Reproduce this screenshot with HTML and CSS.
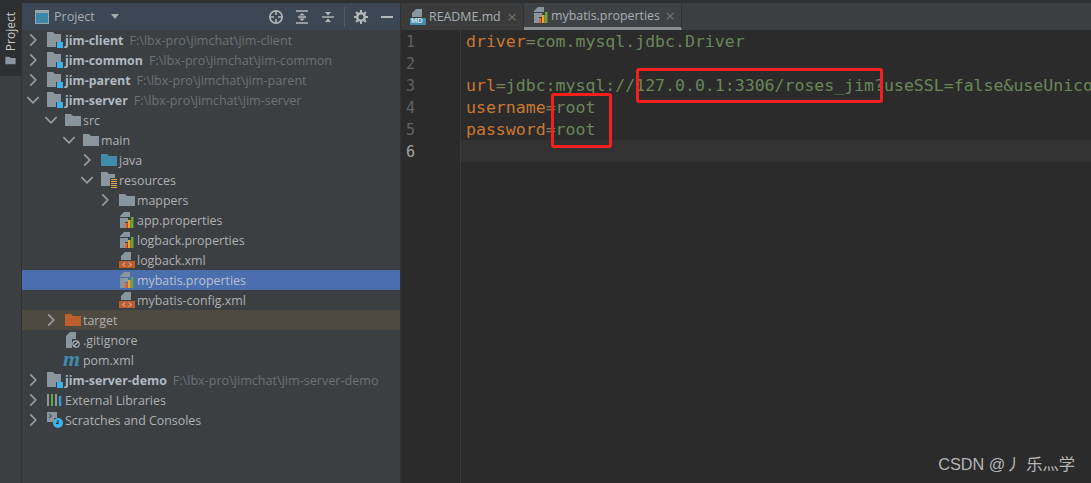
FILE: index.html
```html
<!DOCTYPE html>
<html lang="en">
<head>
    <meta charset="UTF-8">
    <title>mybatis.properties</title>
    <link rel="stylesheet" href="styles.css">
</head>
<body>
    <svg class="defs" width="0" height="0">
        <symbol id="folder" viewBox="0 0 16 14"><path d="M0 1h6l2 2h8v10H0z" fill="#8a969e"/></symbol>
        <symbol id="module" viewBox="0 0 16 16"><path d="M0 0h6l2 2h6v8H9v5H0z" fill="#8a969e"/><rect x="10" y="10" width="6" height="6" fill="#3cb4ea"/></symbol>
        <symbol id="java" viewBox="0 0 16 14"><path d="M0 1h6l2 2h8v10H0z" fill="#3f8cab"/></symbol>
        <symbol id="res" viewBox="0 0 16 16"><path d="M0 0h6l2 2h6v4H9v8H0z" fill="#8a969e"/><path d="M10 7.500h6M10 9.500h6M10 11.500h6M10 13.500h6M10 15.500h6" stroke="#e2a94e" stroke-width="1"/></symbol>
        <symbol id="target" viewBox="0 0 16 14"><path d="M0 1h6l2 2h8v10H0z" fill="#bd5e2d"/></symbol>
        <symbol id="props" viewBox="0 0 14 16"><path d="M4 0h6v5H0V4zM0 6h8v4H5v6H0z" fill="#8a969e"/><rect x="5" y="11" width="2.500" height="5" fill="#e8622c"/><rect x="8" y="8" width="2.500" height="8" fill="#f2a22c"/><rect x="11" y="5" width="2.500" height="11" fill="#62a838"/></symbol>
        <symbol id="xml" viewBox="0 0 16 16"><path d="M6 0h6v8H2V4z" fill="#8a969e"/><rect y="9" width="16" height="7" fill="#bd5e2d"/><path d="M6 10.500 4 12.500l2 2M10 10.500l2 2-2 2" fill="none" stroke="#ddd" stroke-width="1"/></symbol>
        <symbol id="ignore" viewBox="0 0 14 16"><path d="M4 0h6v7H6v9H0V4z" fill="#8a969e"/><circle cx="10" cy="12" r="3.200" fill="none" stroke="#a9b0b5" stroke-width="1.200"/><path d="M8 14l4-4" stroke="#a9b0b5" stroke-width="1.200"/></symbol>
        <symbol id="libs" viewBox="0 0 16 14"><path d="M1 1v12" stroke="#8a969e" stroke-width="2"/><path d="M5 1v12" stroke="#62a838" stroke-width="2"/><path d="M9 1v12" stroke="#8a969e" stroke-width="2"/><path d="M13 3v10" stroke="#3f9cc8" stroke-width="2.400"/></symbol>
        <symbol id="scratch" viewBox="0 0 16 16"><path d="M0 0h10v6H7v4H0z" fill="#8a969e"/><path d="M2 2l2.500 2L2 6" fill="none" stroke="#3c3f41" stroke-width="1"/><circle cx="11" cy="11" r="5" fill="#3cb4ea"/><path d="M11 8v3.400h-2" fill="none" stroke="#2b2b2b" stroke-width="1.100"/></symbol>
        <symbol id="closed" viewBox="0 0 10 10"><path d="M3 1l4 4-4 4" fill="none" stroke="#9a9da0" stroke-width="1.200"/></symbol>
        <symbol id="open" viewBox="0 0 10 10"><path d="M1 3l4 4 4-4" fill="none" stroke="#9a9da0" stroke-width="1.200"/></symbol>
    </svg>

    <div class="topline"></div>
    <div class="ide">
        <div class="strip">
            <div class="strip-btn">
                <span class="strip-label">Project</span>
                <svg class="strip-icon" width="11" height="9"><use href="#folder"/></svg>
            </div>
        </div>

        <div class="sidebar">
            <div class="panel-head">
                <svg class="panel-icon" width="14" height="14" viewBox="0 0 14 14"><rect x=".5" y=".5" width="13" height="13" fill="#3b87a8" stroke="#9aa4ab"/><rect x="1" y="1" width="12" height="2" fill="#9aa4ab"/></svg>
                <span class="panel-title">Project</span>
                <span class="caret"></span>
                <div class="panel-tools">
                    <svg class="tool-target" width="16" height="16" viewBox="0 0 16 16"><circle cx="8" cy="8" r="6.200" fill="none" stroke="#b4b8bb" stroke-width="1.600"/><path d="M8 2v4M8 10v4M2 8h4M10 8h4" stroke="#b4b8bb" stroke-width="1.600"/></svg>
                    <svg width="14" height="14" viewBox="0 0 14 14"><path d="M1 1h12M1 13h12M3 7h8" stroke="#b4b8bb" stroke-width="1.400"/><path d="M7 3l3 2.500H4zM7 11l3-2.500H4z" fill="#b4b8bb"/></svg>
                    <svg width="14" height="14" viewBox="0 0 14 14"><path d="M1 7h12" stroke="#b4b8bb" stroke-width="1.400"/><path d="M7 5.500l3-3.500H4zM7 8.500l3 3.500H4z" fill="#b4b8bb"/></svg>
                    <span class="tool-sep"></span>
                    <svg width="14" height="14" viewBox="0 0 14 14"><circle cx="7" cy="7" r="3.800" fill="none" stroke="#b4b8bb" stroke-width="2.600"/><path d="M7 0v3M7 11v3M0 7h3M11 7h3M2 2l2 2M10 10l2 2M12 2l-2 2M4 10l-2 2" stroke="#b4b8bb" stroke-width="2"/></svg>
                    <span class="minus"></span>
                </div>
            </div>

            <div class="tree">
                <div class="row lv0"><svg class="arrow"><use href="#closed"/></svg><svg class="icon"><use href="#module"/></svg><b>jim-client</b><span class="path">F:\lbx-pro\jimchat\jim-client</span></div>
                <div class="row lv0"><svg class="arrow"><use href="#closed"/></svg><svg class="icon"><use href="#module"/></svg><b>jim-common</b><span class="path">F:\lbx-pro\jimchat\jim-common</span></div>
                <div class="row lv0"><svg class="arrow"><use href="#closed"/></svg><svg class="icon"><use href="#module"/></svg><b>jim-parent</b><span class="path">F:\lbx-pro\jimchat\jim-parent</span></div>
                <div class="row lv0"><svg class="arrow"><use href="#open"/></svg><svg class="icon"><use href="#module"/></svg><b>jim-server</b><span class="path">F:\lbx-pro\jimchat\jim-server</span></div>
                <div class="row lv1"><svg class="arrow"><use href="#open"/></svg><svg class="icon"><use href="#folder"/></svg>src</div>
                <div class="row lv2"><svg class="arrow"><use href="#open"/></svg><svg class="icon"><use href="#folder"/></svg>main</div>
                <div class="row lv3"><svg class="arrow"><use href="#closed"/></svg><svg class="icon"><use href="#java"/></svg>java</div>
                <div class="row lv3"><svg class="arrow"><use href="#open"/></svg><svg class="icon"><use href="#res"/></svg>resources</div>
                <div class="row lv4"><svg class="arrow"><use href="#closed"/></svg><svg class="icon"><use href="#folder"/></svg>mappers</div>
                <div class="row lv4"><span class="arrow"></span><svg class="icon"><use href="#props"/></svg>app.properties</div>
                <div class="row lv4"><span class="arrow"></span><svg class="icon"><use href="#props"/></svg>logback.properties</div>
                <div class="row lv4"><span class="arrow"></span><svg class="icon"><use href="#xml"/></svg>logback.xml</div>
                <div class="row lv4 selected"><span class="arrow"></span><svg class="icon"><use href="#props"/></svg>mybatis.properties</div>
                <div class="row lv4"><span class="arrow"></span><svg class="icon"><use href="#xml"/></svg>mybatis-config.xml</div>
                <div class="row lv1 excluded"><svg class="arrow"><use href="#closed"/></svg><svg class="icon"><use href="#target"/></svg>target</div>
                <div class="row lv1"><span class="arrow"></span><svg class="icon"><use href="#ignore"/></svg>.gitignore</div>
                <div class="row lv1"><span class="arrow"></span><span class="icon pom">m</span>pom.xml</div>
                <div class="row lv0"><svg class="arrow"><use href="#closed"/></svg><svg class="icon"><use href="#module"/></svg><b>jim-server-demo</b><span class="path">F:\lbx-pro\jimchat\jim-server-demo</span></div>
                <div class="row lv0"><svg class="arrow"><use href="#closed"/></svg><svg class="icon"><use href="#libs"/></svg>External Libraries</div>
                <div class="row lv0"><svg class="arrow"><use href="#closed"/></svg><svg class="icon"><use href="#scratch"/></svg>Scratches and Consoles</div>
            </div>
        </div>

        <div class="editor">
            <div class="tabs">
                <div class="tab">
                    <svg class="tab-icon" width="16" height="16" viewBox="0 0 16 16"><path d="M6 0h6v8H2V4z" fill="#8a969e"/><rect y="9" width="16" height="7" fill="#3f8cab"/></svg>
                    <span class="tab-md">MD</span>
                    README.md<span class="tab-x">×</span>
                </div>
                <div class="tab active">
                    <svg class="tab-icon" width="14" height="16"><use href="#props"/></svg>
                    mybatis.properties<span class="tab-x">×</span>
                </div>
            </div>
            <div class="code-area">
                <div class="gutter">
                    <div>1</div><div>2</div><div>3</div><div>4</div><div>5</div><div class="now">6</div>
                </div>
                <div class="code">
                    <div class="line"><span class="k">driver</span><span class="eq">=</span><span class="v">com.mysql.jdbc.Driver</span></div>
                    <div class="line"></div>
                    <div class="line"><span class="k">url</span><span class="eq">=</span><span class="v">jdbc:mysql://127.0.0.1:3306/roses_jim?useSSL=false&amp;useUnico</span></div>
                    <div class="line"><span class="k">username</span><span class="eq">=</span><span class="v">root</span></div>
                    <div class="line"><span class="k">password</span><span class="eq">=</span><span class="v">root</span></div>
                    <div class="line current"></div>
                </div>
            </div>
        </div>
    </div>

    <div class="mark mark-url"></div>
    <div class="mark mark-user"></div>
    <div class="watermark">CSDN @丿 乐灬学</div>
</body>
</html>
```

FILE: styles.css
```css
* {
    box-sizing: border-box;
}

html,
body {
    margin: 0;
    height: 483px;
    overflow: hidden;
}

body {
    position: relative;
    display: flex;
    flex-direction: column;
    background-color: #3c3f41;
    color: #afb1b3;
    font-family: "Open Sans", "Noto Sans", sans-serif;
    font-size: 12.4px;
}

.defs {
    position: absolute;
}

.topline {
    height: 3px;
    flex: none;
    background-color: #2f3031;
}

.ide {
    flex: 1;
    display: flex;
    min-height: 0;
}

/* left tool strip */
.strip {
    width: 22px;
    flex: none;
    border-right: 1px solid #323232;
}

.strip-btn {
    height: 73px;
    display: flex;
    flex-direction: column;
    align-items: center;
    padding-top: 9px;
    gap: 5px;
    background-color: #2d2f30;
}

.strip-label {
    writing-mode: vertical-rl;
    transform: rotate(180deg);
    color: #c8cacb;
    font-size: 12px;
    line-height: 14px;
}

/* project panel */
.sidebar {
    width: 379px;
    flex: none;
    border-right: 1px solid #323232;
}

.panel-head {
    height: 27px;
    display: flex;
    align-items: center;
    padding: 0 7px 0 13px;
    background-color: #3b4754;
}

.panel-icon {
    margin-right: 5px;
}

.panel-title {
    font-size: 12.5px;
    color: #a8adb2;
}

.caret {
    width: 0;
    height: 0;
    margin-left: 16px;
    border-left: 4.500px solid transparent;
    border-right: 4.500px solid transparent;
    border-top: 5px solid #a8adb2;
}

.panel-tools {
    margin-left: auto;
    display: flex;
    align-items: center;
    gap: 12px;
}

.tool-target {
    margin-right: -1px;
}

.tool-sep {
    width: 1px;
    height: 20px;
    background-color: #4f5a66;
    margin: 0 -3px;
}

.minus {
    width: 12px;
    height: 2px;
    margin-left: 1px;
    background-color: #b4b8bb;
}

.row {
    height: 20px;
    display: flex;
    align-items: center;
    white-space: nowrap;
}

.lv0 { padding-left: 4px; }
.lv1 { padding-left: 22px; }
.lv2 { padding-left: 40px; }
.lv3 { padding-left: 58px; }
.lv4 { padding-left: 76px; }

.row b {
    font-weight: 700;
    color: #b0bac2;
}

.path {
    margin-left: 6px;
    color: #6f7173;
    font-size: 12.6px;
}

.arrow {
    width: 14px;
    height: 14px;
    flex: none;
    margin-right: 7px;
}

.icon {
    width: 16px;
    height: 16px;
    flex: none;
    margin-right: 2px;
}

.pom {
    margin-left: -2px;
    margin-right: 4px;
    color: #3f8cab;
    font: italic 700 22px/14px "Liberation Serif", serif;
}

.selected {
    background-color: #4b6eaf;
    color: #b9c2cc;
}

.excluded {
    background-color: #4f4a3f;
}

/* editor */
.editor {
    flex: 1;
    min-width: 0;
    display: flex;
    flex-direction: column;
}

.tabs {
    height: 27px;
    flex: none;
    display: flex;
    background-color: #3c3f41;
}

.tab {
    position: relative;
    display: flex;
    align-items: center;
    padding-left: 10px;
    border-right: 1px solid #323232;
    color: #a9b0b5;
}

.tab:first-child {
    width: 123px;
    padding-left: 9px;
    background-color: #3a3b3a;
}

.tab-icon {
    margin-right: 3px;
}

.tab-md {
    position: absolute;
    left: 10px;
    top: 14px;
    color: #d7e4ea;
    font: 700 7.500px/8px "Liberation Sans", sans-serif;
}

.tab.active {
    width: 158px;
    border-bottom: 3px solid #8a8e91;
    background-color: #3f4244;
}

.tab-x {
    margin-left: auto;
    padding-right: 6px;
    color: #6f7376;
    font-size: 17px;
    line-height: 17px;
}

.code-area {
    flex: 1;
    display: flex;
    min-height: 0;
    background-color: #2b2b2b;
    font-family: "DejaVu Sans Mono", monospace;
    font-size: 16.550px;
    line-height: 24px;
}

.gutter {
    width: 60px;
    flex: none;
    padding-left: 5px;
    color: #606366;
    font-size: 15px;
    border-right: 1px solid #3a3a3a;
}

.gutter div {
    height: 22px;
}

.gutter .now {
    color: #a4a3a3;
}

.code {
    flex: 1;
    min-width: 0;
    overflow: hidden;
}

.line {
    height: 22px;
    padding-left: 5px;
    white-space: pre;
}

.current {
    background-color: #323232;
}

.k {
    color: #cc7832;
}

.eq {
    color: #80815f;
}

.v {
    color: #6a8759;
}

/* red marks drawn over the editor */
.mark {
    position: absolute;
    border: 3px solid #f5201c;
    border-radius: 3px;
}

.mark-url {
    left: 636px;
    top: 68px;
    width: 247px;
    height: 35px;
}

.mark-user {
    left: 551px;
    top: 93px;
    width: 61px;
    height: 55px;
}

.watermark {
    position: absolute;
    right: 16px;
    top: 454px;
    color: #b5b5b5;
    font-family: "Liberation Sans", "Noto Sans CJK SC", sans-serif;
    font-size: 16.300px;
    line-height: 20px;
    white-space: pre;
}
```
